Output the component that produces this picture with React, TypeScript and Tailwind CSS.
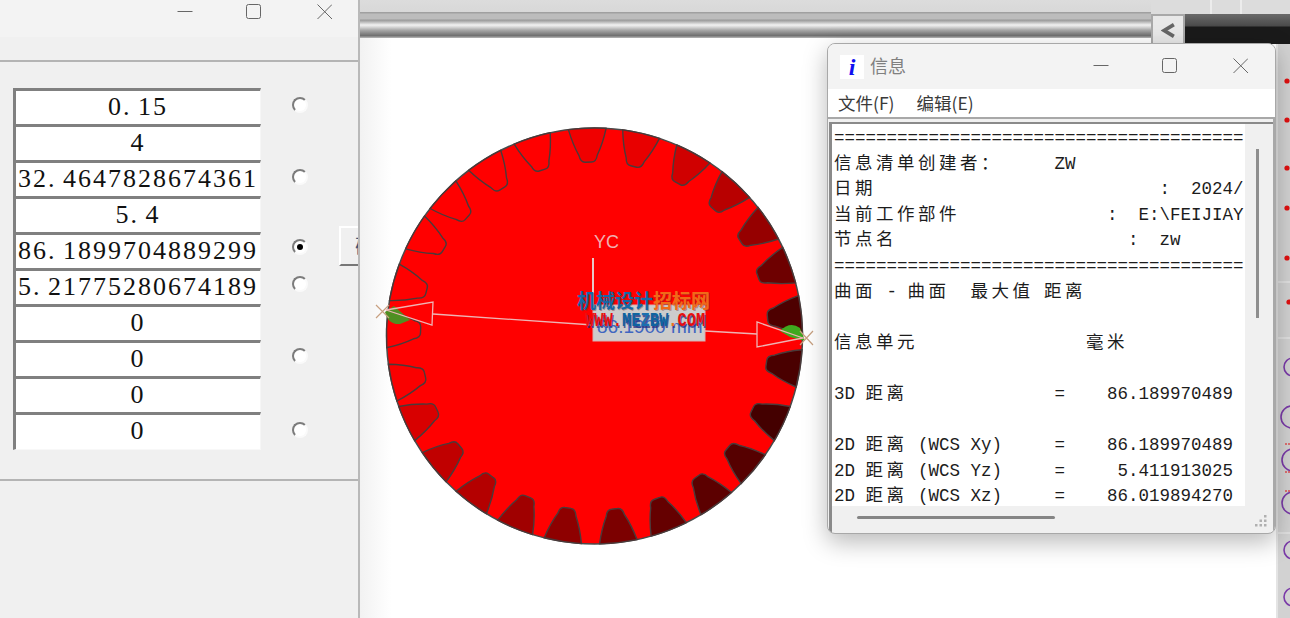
import React from "react";

const CX = 594.5;
const CY = 336;
const gaps: [number, string][] = [
  [-2, "#f00000"], [13, "#e80000"], [28.5, "#d00000"], [43, "#b80000"], [57, "#960000"], [70, "#6e0000"], [84, "#4e0000"],
  [99, "#4a0000"], [115, "#440000"], [130, "#560000"], [144, "#5c0000"], [159, "#650000"], [173.4, "#7c0000"], [188.8, "#8e0000"],
  [202.5, "#a00000"], [216.5, "#b40000"], [230.7, "#c00000"], [245, "#d80000"], [257, "#fa0000"], [272, "#ff0000"], [285, "#ff0000"],
  [300, "#ff0000"], [313, "#ff0000"], [328, "#ff0000"], [342.5, "#ff0000"],
];
const p = (r: number, d: number) => {
  const a = (d * Math.PI) / 180;
  return `${(CX + r * Math.sin(a)).toFixed(1)} ${(CY - r * Math.cos(a)).toFixed(1)}`;
};
const gapPath = (t: number) =>
  `M${p(208, t - 5.2)} Q${p(193, t - 4.5)} ${p(181, t - 2.9)} Q${p(174, t - 2.6)} ${p(174, t - 1)} L${p(174, t + 1)} Q${p(174, t + 2.6)} ${p(181, t + 2.9)} Q${p(193, t + 4.5)} ${p(208, t + 5.2)} A208 208 0 0 0 ${p(208, t - 5.2)}Z`;

function Gear() {
  return (
    <svg viewBox="370 113 460 440" className="w-[460px] h-[440px] shrink-0">
      <circle cx={CX} cy={CY} r={208} fill="#ff0000" stroke="#4a4a4a" strokeWidth={1.5} />
      {gaps.map(([t, c]) => (
        <path key={t} d={gapPath(t)} fill={c} stroke="#4a3a3a" strokeWidth={1.4} />
      ))}
      <path d="M385 312Q388 325 400 324L410 320L394 306Z" fill="#4f8f22" />
      <path d="M780 331Q790 321 800 328L805 341L790 337Z" fill="#3fa81f" />
      <line x1={593} y1={258} x2={593} y2={306} stroke="#e6c8c8" strokeWidth={2} />
      <text x={594} y={248} fontSize={18} fill="#f0b0b0" style={{ fontFamily: "'Liberation Sans', sans-serif" }}>YC</text>
      <rect x={593} y={305} width={112} height={36} fill="#cccccc" stroke="#d8b0b0" strokeWidth={1} />
      <text x={597} y={333} fontSize={19} fill="#3f66c0" style={{ fontFamily: "'Liberation Sans', sans-serif" }}>86.1900 mm</text>
      <g fill="none" stroke="#eeb4b4" strokeWidth={1.3}>
        <path d="M386 310L433 302L432 325Z" />
        <path d="M433 314L593 325" />
        <path d="M705 331L757 334" />
        <path d="M803 338L757 322L757 347Z" />
      </g>
      <g stroke="#c8a080" strokeWidth={1.2}>
        <path d="M376 305L389 318M389 305L376 318" />
        <path d="M800 331L813 345M813 331L800 345" />
      </g>
    </svg>
  );
}

function WinControls({ cls }: { cls: string }) {
  return (
    <svg viewBox="0 0 155 16" className={cls} fill="none" stroke="#666666" strokeWidth={1}>
      <path d="M0.5 8.5H15.5" />
      <rect x={69.5} y={1.5} width={14} height={14} rx={2} />
      <path d="M140.5 1.5L155 16M155 1.5L140.5 16" />
    </svg>
  );
}

function Num({ v }: { v: string }) {
  const [a, b] = v.split(".");
  return (
    <span className="text-[26px] tracking-[2px] text-[#111111] [font-family:'Liberation_Serif','Noto_Sans_CJK_SC',serif]">
      {a}
      {b !== undefined && <span className="mr-[6.5px]">.</span>}
      {b}
    </span>
  );
}

const rows: { v: string; radio?: string; on?: boolean; btn?: boolean }[] = [
  { v: "0.15", radio: "mt-[9px]" },
  { v: "4" },
  { v: "32.4647828674361", radio: "mt-[9px]" },
  { v: "5.4" },
  { v: "86.1899704889299", radio: "mt-[7px]", on: true, btn: true },
  { v: "5.21775280674189", radio: "mt-[8px]" },
  { v: "0" },
  { v: "0", radio: "mt-[8px]" },
  { v: "0" },
  { v: "0", radio: "mt-[10px]" },
];

function LeftPanel() {
  return (
    <div className="w-[360px] shrink-0 h-full bg-[#f0f0f0] border-r-2 border-[#b9b9b9] overflow-hidden flex flex-col">
      <div className="h-[37px] bg-[#f3f3f3] shrink-0 flex items-start justify-end pt-[3px] pr-[26px]">
        <WinControls cls="w-[155px] h-[16px]" />
      </div>
      <div className="h-[25px] shrink-0 border-b-2 border-[#b4b4b4]" />
      <div className="pt-[26px] pl-[13px] flex flex-col">
        {rows.map((r, i) => (
          <div key={i} className="h-[36px] flex items-start">
            <div className={`w-[248px] ${i === 9 ? "h-[38px] border-b border-b-[#f8f8f8]" : "h-[36px]"} shrink-0 bg-white border-t-[3px] border-l-[3px] border-[#808080] border-r border-r-[#f6f6f6] flex items-center justify-center ${i === 9 ? "pb-[4px]" : "pb-[2px]"}`}>
              <Num v={r.v} />
            </div>
            {r.radio && (
              <div className={`${r.radio} ml-[31px] w-[16px] h-[16px] rounded-full shrink-0 bg-white border-2 border-t-[#7c7c7c] border-l-[#7c7c7c] border-r-[#fafafa] border-b-[#fafafa] flex items-center justify-center`}>
                {r.on && <div className="w-[6px] h-[6px] rounded-full bg-black" />}
              </div>
            )}
            {r.btn && (
              <div className="ml-[31px] -mt-[6px] w-[40px] h-[40px] shrink-0 border-t-2 border-l-2 border-white border-b-2 border-b-[#777777] flex items-center pl-[14px] text-[20px] text-[#445577] [font-family:'Noto_Sans_CJK_SC',sans-serif]">
                确
              </div>
            )}
          </div>
        ))}
      </div>
      <div className="mt-[31px] border-t-2 border-[#b4b4b4]" />
    </div>
  );
}

function TopBar() {
  return (
    <div className="h-[38px] shrink-0 flex relative z-10">
      <div className="flex-1 h-[38px] bg-[linear-gradient(180deg,#dcdcdc_0,#d8d8d8_12px,#a0a0a0_12px,#a0a0a0_13px,#bcbcbc_14px,#bcbcbc_19px,#999999_20px,#a8a8a8_21px,#f2f2f2_25px,#d8d8d8_27px,#aaaaaa_30px,#8a8a8a_33px,#6c6c6c_36px,#aaaaaa_37px)]" />
      <div className="w-[139px] shrink-0 h-[44px] flex flex-col">
        <div className="h-[14px] bg-[#dcdcdc] flex justify-end">
          <div className="w-[30px] border-l-2 border-[#ececec]" />
          <div className="w-[50px] border-l-2 border-[#ececec]" />
        </div>
        <div className="flex-1 flex">
          <div className="w-[34px] shrink-0 bg-[#e8e8e8] border-2 border-t-[#a8a8a8] border-l-[#a8a8a8] border-r-[#a8a8a8] border-b-0 flex items-center justify-center">
            <svg viewBox="0 0 14 14" className="w-[15px] h-[15px]">
              <path d="M12 1.5L3 7L12 12.5" fill="none" stroke="#666666" strokeWidth={3.4} />
            </svg>
          </div>
          <div className="flex-1 bg-[linear-gradient(180deg,#6a6a6a_0,#4a4a4a_12px,#1a1a1a_13px)]" />
        </div>
      </div>
    </div>
  );
}

function RightStrip() {
  return (
    <div className="w-[14px] shrink-0 h-full bg-[#d2d2d2] border-l-2 border-[#e4e4e4] pt-[6px]">
      <svg viewBox="0 0 12 574" className="w-[12px] h-[574px]">
        {[37, 76, 124, 164, 214, 258].map((y, i) => (
          <circle key={y} cx={i === 5 ? 11 : 9} cy={y} r={2.6} fill="#e01010" />
        ))}
        <path d="M0 238H12M0 294H12M0 489H12" stroke="#eeeeee" strokeWidth={1} />
        <g fill="none" stroke="#7a3aa8" strokeWidth={1.6}>
          <circle cx={15} cy={323} r={9} />
          <circle cx={14} cy={373} r={11} />
          <circle cx={15} cy={416} r={11} />
          <circle cx={15} cy={459} r={11} />
          <circle cx={15} cy={506} r={9} />
          <circle cx={15} cy={553} r={9} />
        </g>
        <path d="M7 400H12M7 428H12M7 447H12" stroke="#e05050" strokeWidth={1.6} strokeDasharray="2 1" />
      </svg>
    </div>
  );
}

const CJK = /([\u3000-\u9fff\uff00-\uffef]+)/;
function Line({ t }: { t: string }) {
  const parts = t.split(CJK);
  return (
    <div className="h-[25.6px] leading-[25.6px] whitespace-pre">
      {parts.map((s, i) =>
        CJK.test(s) ? (
          <span key={i} className="tracking-[3.5px]">{s}</span>
        ) : (
          <span key={i}>{s}</span>
        )
      )}
    </div>
  );
}

const EQ = "=======================================";
const lines = [
  EQ,
  "信息清单创建者：     ZW",
  "日期                           :  2024/",
  "当前工作部件              :  E:\\FEIJIAY",
  "节点名                      :  zw",
  EQ,
  "曲面 - 曲面  最大值 距离",
  " ",
  "信息单元                毫米",
  " ",
  "3D 距离              =    86.189970489",
  " ",
  "2D 距离 (WCS Xy)     =    86.189970489",
  "2D 距离 (WCS Yz)     =     5.411913025",
  "2D 距离 (WCS Xz)     =    86.019894270",
];

function InfoWindow() {
  return (
    <div className="absolute z-20 left-[827px] top-[43px] w-[449px] h-[491px] rounded-[8px] border border-[#a8a8a8] bg-[#f0f0f0] overflow-hidden flex flex-col shadow-[0_8px_24px_rgba(0,0,0,0.28)]">
      <div className="h-[45px] shrink-0 bg-[#f3f3f3] flex items-center pl-[12px] pr-[27px]">
        <div className="w-[24px] h-[24px] bg-white flex items-center justify-center text-[#1010f0] text-[24px] font-bold italic [font-family:'Liberation_Serif',serif]">
          i
        </div>
        <span className="ml-[6px] mb-[2px] text-[18px] text-[#808080] [font-family:'Noto_Sans_CJK_SC',sans-serif]">信息</span>
        <WinControls cls="ml-auto w-[155px] h-[16px] mb-[4px]" />
      </div>
      <div className="h-[28px] shrink-0 bg-white flex items-center pl-[10px] gap-[22px] text-[17.5px] text-[#3a3a3a] [font-family:'Noto_Sans_CJK_SC',sans-serif]">
        <span>文件(F)</span>
        <span>编辑(E)</span>
      </div>
      <div className="flex-1 min-h-0 flex flex-col border-t-2 border-[#a8a8a8] border-r-2 border-r-[#a8a8a8] pl-[1px] pt-[3px]">
        <div className="flex-1 min-h-0 flex flex-col border-l-[3px] border-t-2 border-[#8a8a8a]">
          <div className="flex min-h-0 h-[382px]">
            <div className="w-[413px] shrink-0 bg-white overflow-hidden pl-[2px] pt-[2px] text-[17.5px] text-[#1c1c1c] [font-family:'Liberation_Mono','Noto_Sans_CJK_SC',monospace]">
              {lines.map((l, i) => (
                <Line key={i} t={l} />
              ))}
            </div>
            <div className="flex-1 pt-[25px] pl-[11px]">
              <div className="w-[3px] h-[169px] bg-[#8e8e8e]" />
            </div>
          </div>
          <div className="flex-1 relative pl-[25px] pt-[10px]">
            <div className="w-[198px] h-[3px] bg-[#858585] rounded-full" />
            <svg viewBox="0 0 14 14" className="absolute right-[5px] bottom-[5px] w-[14px] h-[14px]" fill="#b0b0b0">
              <rect x={10} y={1} width={2.5} height={2.5} />
              <rect x={5.5} y={5.5} width={2.5} height={2.5} />
              <rect x={10} y={5.5} width={2.5} height={2.5} />
              <rect x={1} y={10} width={2.5} height={2.5} />
              <rect x={5.5} y={10} width={2.5} height={2.5} />
              <rect x={10} y={10} width={2.5} height={2.5} />
            </svg>
          </div>
        </div>
      </div>
    </div>
  );
}

function Watermark() {
  return (
    <div className="absolute z-10 left-[577px] top-[288px] w-[140px]">
      <div className="text-[19px] leading-[24px] font-bold whitespace-pre [font-family:'Noto_Sans_CJK_SC',sans-serif] [text-shadow:1px_1px_0_rgba(120,60,60,0.45)]">
        <span className="text-[#1468a8]">机械设计</span>
        <span className="text-[#f06a18]">招标网</span>
      </div>
      <div className="ml-[8px] text-[15.4px] leading-[18px] font-bold whitespace-pre scale-y-[1.35] [font-family:'Liberation_Mono',monospace] [text-shadow:1px_1px_0_rgba(40,50,130,0.75)]">
        <span className="text-[#e81010]">WWW.</span>
        <span className="text-[#0f64a0]">ME</span>
        <span className="text-[#1a70b0]">Z</span>
        <span className="text-[#0f64a0]">BW</span>
        <span className="text-[#f07018]">.</span>
        <span className="text-[#e81010]">COM</span>
      </div>
    </div>
  );
}

export default function App() {
  return (
    <div className="relative w-[1290px] h-[618px] overflow-hidden flex bg-white">
      <LeftPanel />
      <div className="flex-1 min-w-0 flex flex-col">
        <TopBar />
        <div className="flex-1 min-h-0 flex">
          <div className="flex-1 min-w-0 bg-[linear-gradient(90deg,#f2f2f2_0,#ffffff_32px)] overflow-hidden pl-[10px] pt-[75px]">
            <Gear />
          </div>
          <RightStrip />
        </div>
      </div>
      <Watermark />
      <InfoWindow />
    </div>
  );
}
